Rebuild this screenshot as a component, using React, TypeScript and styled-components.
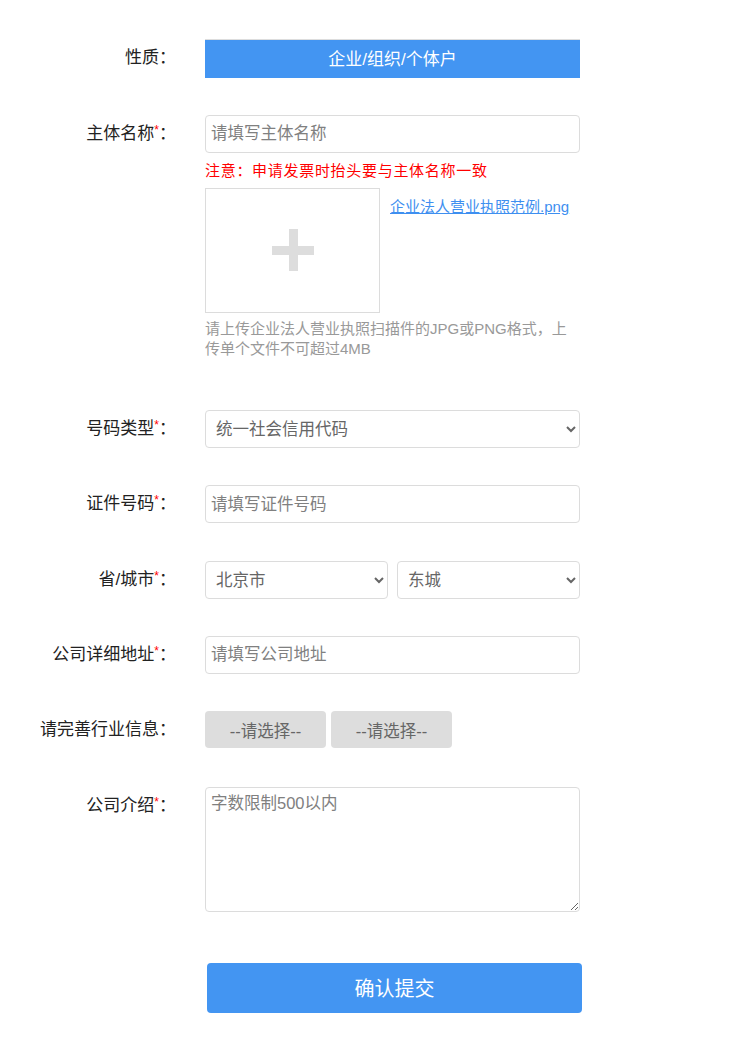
import styled, { createGlobalStyle } from "styled-components";

const GlobalStyle = createGlobalStyle`
  html, body {
    margin: 0;
    padding: 0;
    background: #fff;
  }
  body {
    font-family: "Liberation Sans", "Noto Sans CJK SC", sans-serif;
    color: #333;
  }
  * {
    box-sizing: border-box;
  }
`;

const Form = styled.form`
  display: flex;
  flex-direction: column;
  gap: 37.4px;
  padding: 38.5px 0 31px;
`;

const Row = styled.div<{ $extraGap?: number }>`
  display: flex;
  align-items: flex-start;
  gap: 29px;
  margin-bottom: ${(props) => props.$extraGap || 0}px;
`;

const Label = styled.div`
  width: 176px;
  height: 38px;
  flex-shrink: 0;
  text-align: right;
  font-size: 17px;
  line-height: 38px;
  color: #222;
  white-space: nowrap;
`;

const Star = styled.span`
  color: #f00;
  font-size: 12px;
  vertical-align: top;
  line-height: 30px;
`;

const Field = styled.div`
  width: 375px;
  display: flex;
  flex-direction: column;
`;

const TypeButton = styled.button`
  width: 375px;
  height: 39px;
  padding: 0 0 3px;
  border: none;
  border-top: 1px solid #ddd;
  background: #4395f2;
  color: #fff;
  font-family: inherit;
  font-size: 17px;
  cursor: pointer;
`;

const TextInput = styled.input`
  width: 100%;
  height: 38px;
  padding: 0 5px;
  border: 1px solid #dcdcdc;
  border-radius: 4px;
  font-family: inherit;
  font-size: 16.5px;
  color: #333;
  outline: none;

  &::placeholder {
    color: #808080;
  }
`;

const Note = styled.p`
  margin: 9px 0 0;
  font-size: 15px;
  letter-spacing: 0.7px;
  line-height: 18px;
  color: #f00;
`;

const UploadRow = styled.div`
  display: flex;
  align-items: flex-start;
  gap: 10px;
  margin-top: 8px;
`;

const UploadBox = styled.div`
  width: 175px;
  height: 125px;
  border: 1px solid #dcdcdc;
  display: flex;
  align-items: center;
  justify-content: center;
  cursor: pointer;
`;

const SampleLink = styled.a`
  margin-top: 9px;
  font-size: 15px;
  line-height: 20px;
  color: #3e8ff0;
  text-decoration: underline;
`;

const Hint = styled.p`
  margin: 6px 0 0;
  font-size: 15px;
  line-height: 20px;
  color: #999;
`;

const Select = styled.select<{ $width?: number }>`
  width: ${(props) => props.$width || 375}px;
  height: 38px;
  padding: 0 6px;
  border: 1px solid #dcdcdc;
  border-radius: 4px;
  background: #fff;
  font-family: inherit;
  font-size: 16.5px;
  color: #666;
  outline: none;
`;

const Inline = styled.div<{ $gap: number }>`
  display: flex;
  gap: ${(props) => props.$gap}px;
`;

const PickButton = styled.button`
  width: 121px;
  height: 37px;
  border: none;
  border-radius: 4px;
  background: #ddd;
  color: #666;
  font-family: inherit;
  font-size: 16.5px;
  cursor: pointer;
`;

const TextArea = styled.textarea`
  width: 375px;
  height: 125px;
  padding: 4px 5px;
  border: 1px solid #dcdcdc;
  border-radius: 4px;
  font-family: inherit;
  font-size: 16.5px;
  line-height: 22px;
  color: #333;
  outline: none;

  &::placeholder {
    color: #808080;
  }
`;

const SubmitWrap = styled.div`
  padding-left: 207px;
  margin-top: 13.6px;
`;

const SubmitButton = styled.button`
  width: 375px;
  height: 50px;
  border: none;
  border-radius: 4px;
  background: #4395f2;
  color: #fff;
  font-family: inherit;
  font-size: 20px;
  cursor: pointer;
`;

const FieldLabel = ({ text, required }: { text: string; required?: boolean }) => (
  <Label>
    {text}
    {required && <Star>*</Star>}：
  </Label>
);

const PlusIcon = () => (
  <svg width="46" height="46" viewBox="0 0 46 46">
    <rect x="19" y="2" width="9" height="42" fill="#dddddd" />
    <rect x="2" y="19" width="42" height="9" fill="#dddddd" />
  </svg>
);

const App = () => {
  return (
    <>
      <GlobalStyle />
      <Form onSubmit={(e) => e.preventDefault()}>
        <Row>
          <FieldLabel text="性质" />
          <Field>
            <TypeButton type="button">企业/组织/个体户</TypeButton>
          </Field>
        </Row>

        <Row $extraGap={13.5}>
          <FieldLabel text="主体名称" required />
          <Field>
            <TextInput placeholder="请填写主体名称" />
            <Note>注意：申请发票时抬头要与主体名称一致</Note>
            <UploadRow>
              <UploadBox>
                <PlusIcon />
              </UploadBox>
              <SampleLink href="#">企业法人营业执照范例.png</SampleLink>
            </UploadRow>
            <Hint>
              请上传企业法人营业执照扫描件的JPG或PNG格式，上传单个文件不可超过4MB
            </Hint>
          </Field>
        </Row>

        <Row>
          <FieldLabel text="号码类型" required />
          <Select defaultValue="统一社会信用代码">
            <option>统一社会信用代码</option>
            <option>营业执照注册号</option>
          </Select>
        </Row>

        <Row>
          <FieldLabel text="证件号码" required />
          <Field>
            <TextInput placeholder="请填写证件号码" />
          </Field>
        </Row>

        <Row>
          <FieldLabel text="省/城市" required />
          <Inline $gap={9}>
            <Select $width={183} defaultValue="北京市">
              <option>北京市</option>
              <option>上海市</option>
            </Select>
            <Select $width={183} defaultValue="东城">
              <option>东城</option>
              <option>西城</option>
            </Select>
          </Inline>
        </Row>

        <Row>
          <FieldLabel text="公司详细地址" required />
          <Field>
            <TextInput placeholder="请填写公司地址" />
          </Field>
        </Row>

        <Row>
          <FieldLabel text="请完善行业信息" />
          <Inline $gap={5}>
            <PickButton type="button">--请选择--</PickButton>
            <PickButton type="button">--请选择--</PickButton>
          </Inline>
        </Row>

        <Row>
          <FieldLabel text="公司介绍" required />
          <TextArea placeholder="字数限制500以内" />
        </Row>

        <SubmitWrap>
          <SubmitButton type="submit">确认提交</SubmitButton>
        </SubmitWrap>
      </Form>
    </>
  );
};

export default App;
